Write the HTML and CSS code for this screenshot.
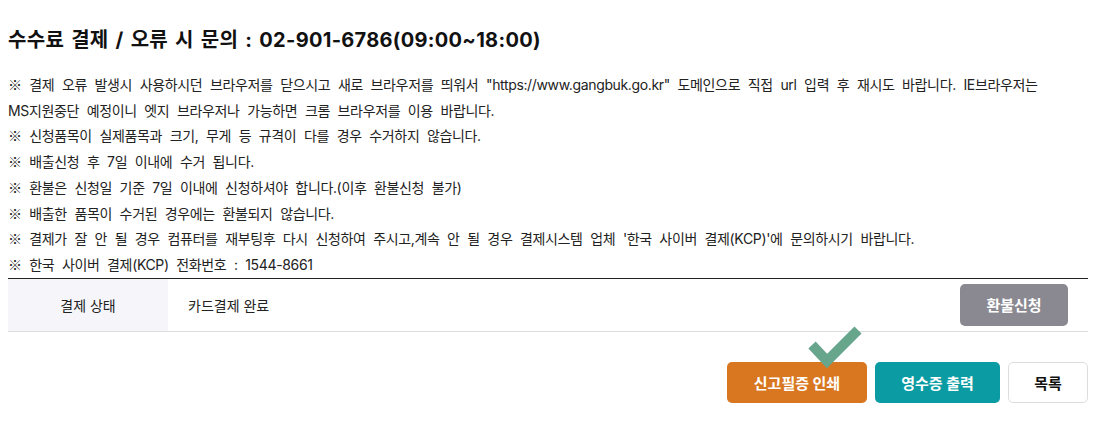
FILE: index.html
```html
<!DOCTYPE html>
<html lang="ko">
<head>
    <meta charset="UTF-8" />
    <meta content="width=device-width, initial-scale=1.0" name="viewport" />
    <title>수수료 결제</title>
    <link rel="stylesheet" href="styles.css">
</head>
<body>

<main class="pay-box">
    <h2 class="pay-title">수수료 결제 / 오류 시 문의 : 02-901-6786(09:00~18:00)</h2>

    <!-- 안내 문구 -->
    <ul class="notice-list">
        <li><span class="mark">※</span> 결제 오류 발생시 사용하시던 브라우저를 닫으시고 새로 브라우저를 띄워서 "https://www.gangbuk.go.kr" 도메인으로 직접 url 입력 후 재시도 바랍니다. IE브라우저는<br>MS지원중단 예정이니 엣지 브라우저나 가능하면 크롬 브라우저를 이용 바랍니다.</li>
        <li><span class="mark">※</span> 신청품목이 실제품목과 크기, 무게 등 규격이 다를 경우 수거하지 않습니다.</li>
        <li><span class="mark">※</span> 배출신청 후 7일 이내에 수거 됩니다.</li>
        <li><span class="mark">※</span> 환불은 신청일 기준 7일 이내에 신청하셔야 합니다.(이후 환불신청 불가)</li>
        <li><span class="mark">※</span> 배출한 품목이 수거된 경우에는 환불되지 않습니다.</li>
        <li><span class="mark">※</span> 결제가 잘 안 될 경우 컴퓨터를 재부팅후 다시 신청하여 주시고,계속 안 될 경우 결제시스템 업체 '한국 사이버 결제(KCP)'에 문의하시기 바랍니다.</li>
        <li><span class="mark">※</span> 한국 사이버 결제(KCP) 전화번호 : 1544-8661</li>
    </ul>

    <!-- 결제 상태 -->
    <div class="status-row">
        <div class="status-label">결제 상태</div>
        <div class="status-value">카드결제 완료</div>
        <div class="status-action">
            <button class="btn btn-gray">환불신청</button>
        </div>
    </div>

    <div class="btn-area">
        <button class="btn btn-orange">신고필증 인쇄</button>
        <button class="btn btn-teal">영수증 출력</button>
        <button class="btn btn-white">목록</button>
        <svg class="check-mark" width="60" height="50" viewBox="0 0 60 50">
            <polyline points="6,20 21,36 52,5" fill="none" stroke="#67a58d" stroke-width="10" />
        </svg>
    </div>
</main>

</body>
</html>
```

FILE: styles.css
```css
* {
    box-sizing: border-box;
    margin: 0;
    padding: 0;
}

body {
    font-family: Inter, "Noto Sans CJK KR", sans-serif;
    color: #222;
    background: #fff;
}

.pay-box {
    padding: 28px 22px 0 8px;
}

.pay-title {
    font-size: 20px;
    line-height: 24px;
    font-weight: 700;
    color: #111;
    letter-spacing: 0.3px;
    word-spacing: 2px;
}

.notice-list {
    list-style: none;
    margin-top: 20px;
    font-size: 14px;
    line-height: 25.7px;
    letter-spacing: -0.35px;
    word-spacing: 4px;
    word-break: keep-all;
}

.notice-list .mark {
    font-family: "Noto Sans CJK KR", sans-serif;
}

.status-row {
    display: flex;
    align-items: center;
    height: 54px;
    border-top: 1px solid #222;
    border-bottom: 1px solid #ddd;
    font-size: 14px;
}

.status-label {
    width: 160px;
    align-self: stretch;
    display: flex;
    align-items: center;
    justify-content: center;
    background: #f6f6fa;
}

.status-value {
    flex: 1;
    padding-left: 20px;
}

.status-action {
    padding-right: 20px;
}

.btn {
    height: 41px;
    border: none;
    border-radius: 5px;
    font-family: inherit;
    font-size: 15px;
    font-weight: 700;
    color: #fff;
    cursor: pointer;
}

.btn-gray {
    width: 108px;
    height: 42px;
    background: #8a8991;
}

.btn-area {
    position: relative;
    display: flex;
    justify-content: flex-end;
    gap: 8px;
    margin-top: 30px;
}

.btn-orange {
    width: 140px;
    background: #d97721;
}

.btn-teal {
    width: 125px;
    background: #0b9ca3;
}

.btn-white {
    width: 80px;
    background: #fff;
    color: #111;
    border: 1px solid #ddd;
}

/* 체크 표시 */
.check-mark {
    position: absolute;
    left: 798px;
    top: -37px;
}
```
